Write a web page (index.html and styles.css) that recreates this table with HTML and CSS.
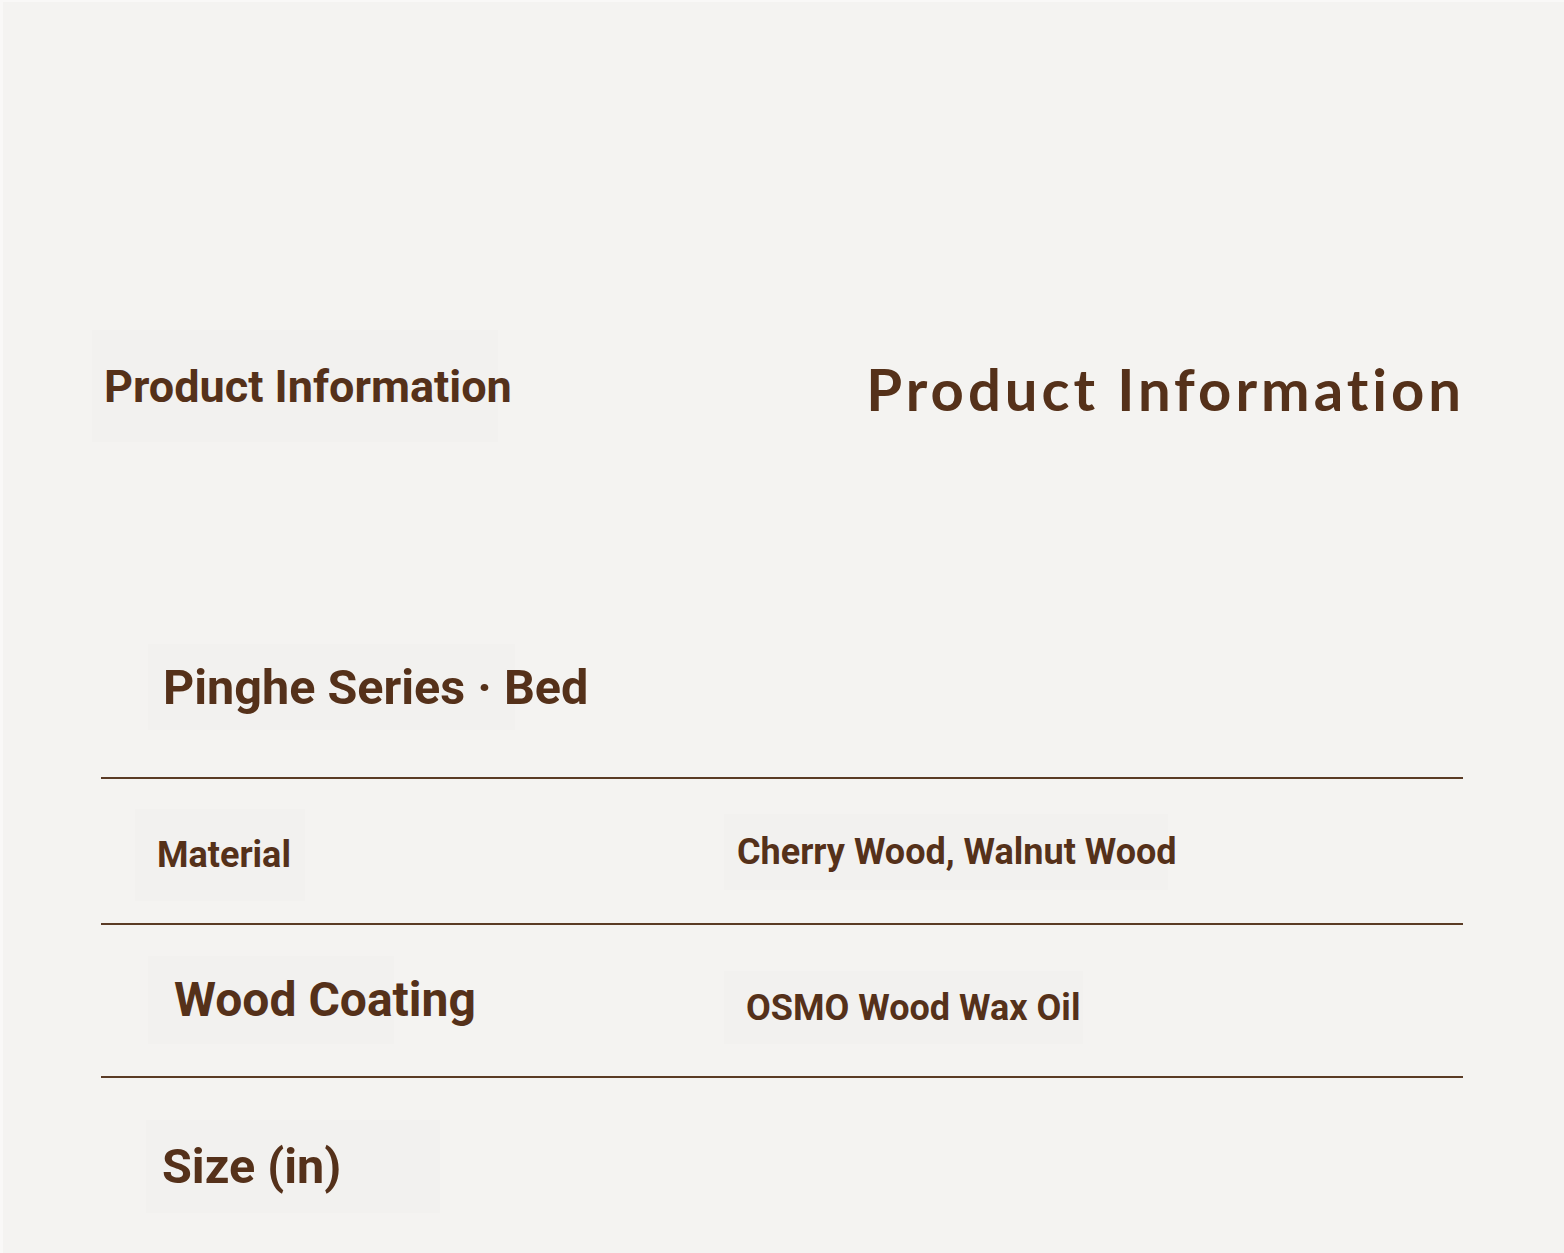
FILE: index.html
```html
<!DOCTYPE html>
<html>
<head>
    <title>Product Information</title>
    <link rel="stylesheet" href="styles.css">
</head>
<body>
    <div class="page">
        <div class="header">
            <div class="box head-left">Product Information</div>
            <h1 class="head-right">Product Information</h1>
        </div>

        <div class="series">
            <div class="box series-name">Pinghe Series · Bed</div>
        </div>

        <div class="specs">
            <div class="row row-material">
                <div class="box label label-material">Material</div>
                <div class="box value value-material">Cherry Wood, Walnut Wood</div>
            </div>
            <div class="row row-coating">
                <div class="box label label-coating">Wood Coating</div>
                <div class="box value value-coating">OSMO Wood Wax Oil</div>
            </div>
            <div class="row row-size">
                <div class="box label label-size">Size (in)</div>
            </div>
        </div>
    </div>
</body>
</html>
```

FILE: styles.css
```css
html, body {
    margin: 0;
    padding: 0;
}
body {
    background-color: #f9f8f7;
    font-family: Roboto, "Liberation Sans", sans-serif;
    color: #55311a;
}
.page {
    margin: 2px 0 0 3px;
    height: 1251px;
    background-color: #f4f3f1;
    padding: 0 101px 0 98px;
    box-sizing: border-box;
}
.box {
    background-color: #f2f1ef;
    font-weight: 700;
    white-space: nowrap;
}

/* header */
.header {
    display: flex;
    justify-content: space-between;
    align-items: center;
    padding-top: 328px;
}
.head-left {
    margin-left: -9px;
    width: 394px;
    height: 112px;
    padding-left: 12px;
    display: flex;
    align-items: center;
    font-size: 45px;
}
.head-right {
    margin: 4px -2px 0 0;
    font-family: Lato, "Open Sans", sans-serif;
    font-weight: 700;
    font-size: 58px;
    letter-spacing: 4px;
    color: #55311a;
}

/* series */
.series {
    padding-top: 202px;
    height: 133px;
    box-sizing: content-box;
}
.series-name {
    margin-left: 47px;
    width: 352px;
    height: 86px;
    padding-left: 15px;
    display: flex;
    align-items: center;
    font-size: 48.5px;
}

/* spec rows */
.row {
    display: grid;
    grid-template-columns: 623px 1fr;
    align-items: center;
    border-top: 2px solid #5a3b25;
}
.row-material {
    height: 144px;
}
.row-coating {
    height: 151px;
}
.row-size {
    height: 175px;
    align-items: start;
}
.label, .value {
    display: flex;
    align-items: center;
    justify-self: start;
}
.label-material {
    margin-left: 34px;
    margin-top: 8px;
    padding: 0 14px 0 22px;
    height: 92px;
    font-size: 36px;
}
.value-material {
    padding: 0 0 0 13px;
    width: 431px;
    height: 76px;
    margin-top: 2px;
    font-size: 36px;
}
.label-coating {
    margin-left: 47px;
    padding-left: 26px;
    width: 220px;
    height: 88px;
    margin-top: -2px;
    font-size: 48px;
}
.value-coating {
    padding-left: 22px;
    width: 337px;
    height: 73px;
    margin-top: 14px;
    font-size: 36px;
}
.label-size {
    margin-top: 42px;
    margin-left: 45px;
    padding-left: 16px;
    width: 278px;
    height: 93px;
    font-size: 48.5px;
}
```
